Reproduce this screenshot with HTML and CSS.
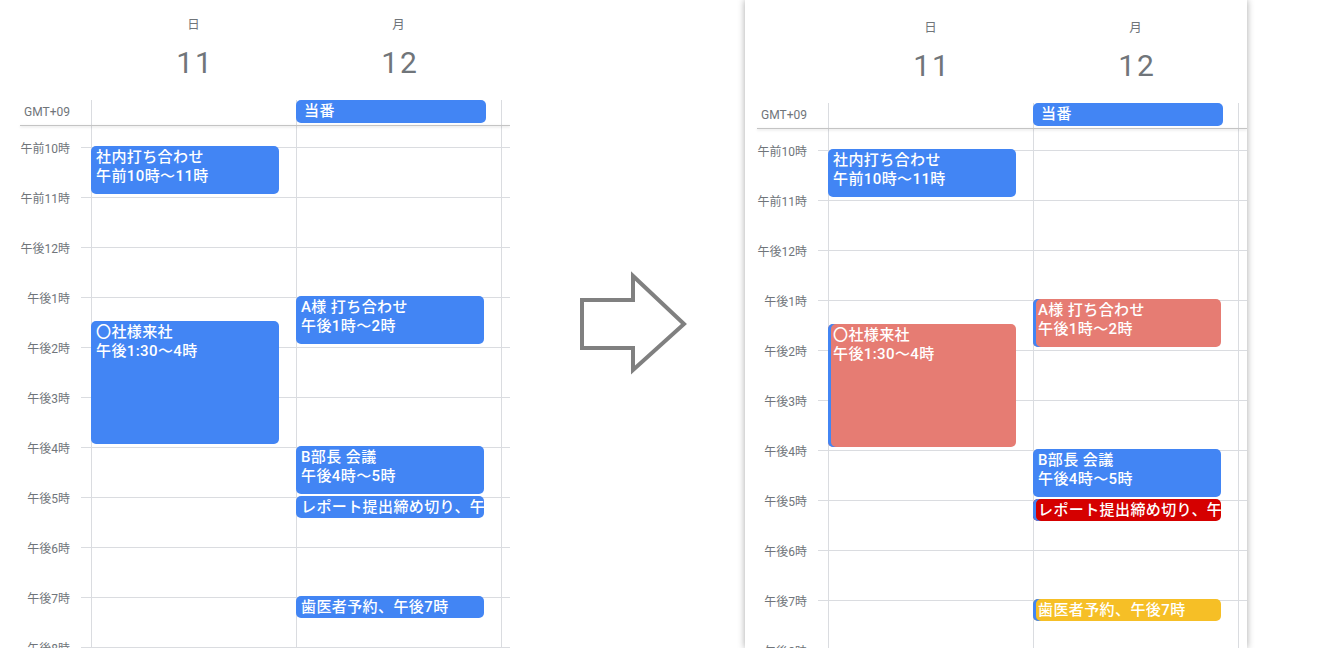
FILE: index.html
```html
<!DOCTYPE html>
<html lang="ja">
<head>
<meta charset="utf-8">
<title>カレンダー</title>
<link rel="stylesheet" href="styles.css">
</head>
<body>
<div class="stage">
  <section class="panel panel-left">
    <div class="days">
      <div></div>
      <div class="day"><div class="dayname">日</div><div class="daynum">11</div></div>
      <div class="day"><div class="dayname">月</div><div class="daynum">12</div></div>
      <div></div>
    </div>
    <div class="allday">
      <div class="tz">GMT+09</div>
      <div class="cell"></div>
      <div class="cell"><div class="allday-event">当番</div></div>
      <div class="cell"></div>
    </div>
    <div class="sep"></div>
    <div class="body">
      <div class="grid">
        <div class="row"><div class="hour">午前9時</div></div>
        <div class="row"><div class="hour">午前10時</div></div>
        <div class="row"><div class="hour">午前11時</div></div>
        <div class="row"><div class="hour">午後12時</div></div>
        <div class="row"><div class="hour">午後1時</div></div>
        <div class="row"><div class="hour">午後2時</div></div>
        <div class="row"><div class="hour">午後3時</div></div>
        <div class="row"><div class="hour">午後4時</div></div>
        <div class="row"><div class="hour">午後5時</div></div>
        <div class="row"><div class="hour">午後6時</div></div>
        <div class="row"><div class="hour">午後7時</div></div>
        <div class="row"><div class="hour">午後8時</div></div>
        <div class="cols">
          <div></div>
          <div class="col">
            <div class="ev" style="top:49px;height:48px">社内打ち合わせ<br>午前10時〜11時</div>
            <div class="ev" style="top:224px;height:123px">〇社様来社<br>午後1:30〜4時</div>
          </div>
          <div class="col">
            <div class="ev" style="top:199px;height:48px">A様 打ち合わせ<br>午後1時〜2時</div>
            <div class="ev" style="top:349px;height:48px">B部長 会議<br>午後4時〜5時</div>
            <div class="ev" style="top:399px;height:22px">レポート提出締め切り、午後5時</div>
            <div class="ev" style="top:499px;height:22px">歯医者予約、午後7時</div>
          </div>
          <div class="col"></div>
        </div>
      </div>
    </div>
  </section>

  <div class="arrow">
    <svg width="235" height="648" viewBox="0 0 235 648">
      <polygon points="72,300 123,300 123,276 174,324 123,370 123,348 72,348" fill="none" stroke="#808080" stroke-width="4" stroke-linejoin="miter"/>
    </svg>
  </div>

  <section class="panel panel-right">
    <div class="days">
      <div></div>
      <div class="day"><div class="dayname">日</div><div class="daynum">11</div></div>
      <div class="day"><div class="dayname">月</div><div class="daynum">12</div></div>
      <div></div>
    </div>
    <div class="allday">
      <div class="tz">GMT+09</div>
      <div class="cell"></div>
      <div class="cell"><div class="allday-event">当番</div></div>
      <div class="cell"></div>
    </div>
    <div class="sep"></div>
    <div class="body">
      <div class="grid">
        <div class="row"><div class="hour">午前9時</div></div>
        <div class="row"><div class="hour">午前10時</div></div>
        <div class="row"><div class="hour">午前11時</div></div>
        <div class="row"><div class="hour">午後12時</div></div>
        <div class="row"><div class="hour">午後1時</div></div>
        <div class="row"><div class="hour">午後2時</div></div>
        <div class="row"><div class="hour">午後3時</div></div>
        <div class="row"><div class="hour">午後4時</div></div>
        <div class="row"><div class="hour">午後5時</div></div>
        <div class="row"><div class="hour">午後6時</div></div>
        <div class="row"><div class="hour">午後7時</div></div>
        <div class="row"><div class="hour">午後8時</div></div>
        <div class="cols">
          <div></div>
          <div class="col">
            <div class="ev" style="top:49px;height:48px">社内打ち合わせ<br>午前10時〜11時</div>
            <div class="ev ev-salmon" style="top:224px;height:123px">〇社様来社<br>午後1:30〜4時</div>
          </div>
          <div class="col">
            <div class="ev ev-salmon" style="top:199px;height:48px">A様 打ち合わせ<br>午後1時〜2時</div>
            <div class="ev" style="top:349px;height:48px">B部長 会議<br>午後4時〜5時</div>
            <div class="ev ev-red" style="top:399px;height:22px">レポート提出締め切り、午後5時</div>
            <div class="ev ev-yellow" style="top:499px;height:22px">歯医者予約、午後7時</div>
          </div>
          <div class="col"></div>
        </div>
      </div>
    </div>
  </section>
</div>
</body>
</html>
```
FILE: styles.css
```css
* { box-sizing: border-box; }

body {
  margin: 0;
  background: #ffffff;
  font-family: Roboto, "Noto Sans CJK JP", sans-serif;
}

.stage {
  display: flex;
  align-items: flex-start;
  height: 648px;
  overflow: hidden;
}

.panel {
  flex: none;
  width: 502px;
  height: 648px;
  background: #ffffff;
  display: flex;
  flex-direction: column;
  overflow: hidden;
}

.panel-left { margin-left: 8px; }

.panel-right {
  padding-top: 3px;
  box-shadow: 0 0 7px rgba(0, 0, 0, 0.35);
}

.arrow {
  flex: none;
  width: 235px;
  height: 648px;
}
.arrow svg { display: block; }

.days {
  flex: none;
  display: grid;
  grid-template-columns: 83px 205px 205px 9px;
  height: 100px;
}

.day { text-align: center; color: #70757a; }

.dayname {
  padding-top: 17px;
  font-size: 12.5px;
  line-height: 16px;
}

.daynum {
  margin-top: 12px;
  font-size: 30px;
  line-height: 36px;
  letter-spacing: 2px;
  padding-left: 3px;
}

.allday {
  flex: none;
  display: grid;
  grid-template-columns: 83px 205px 205px 9px;
  height: 25px;
}

.tz {
  font-size: 12px;
  line-height: 25px;
  color: #70757a;
  text-align: right;
  padding-right: 21px;
}

.cell,
.col {
  background: linear-gradient(#dadce0, #dadce0) no-repeat 0 0 / 1px 100%;
}

.allday-event {
  height: 23px;
  margin-right: 15px;
  border-radius: 5px;
  background: #4285f4;
  color: #ffffff;
  font-size: 15px;
  font-weight: 500;
  line-height: 23px;
  padding-left: 8px;
  letter-spacing: 0.4px;
}

.sep {
  flex: none;
  margin-left: 12px;
  height: 1px;
  background: #c4c4c4;
  box-shadow: 0 1px 3px rgba(0, 0, 0, 0.18);
  position: relative;
  z-index: 1;
}

.body {
  flex: 1;
  overflow: hidden;
}

.grid {
  position: relative;
  margin-top: -29px;
}

.row {
  display: grid;
  grid-template-columns: 83px 1fr;
  height: 50px;
  background: linear-gradient(#dadce0, #dadce0) no-repeat 73px 0 / calc(100% - 73px) 1px;
}

.hour {
  margin-top: -5px;
  font-size: 12px;
  line-height: 14px;
  color: #70757a;
  text-align: right;
  padding-right: 21px;
}

.cols {
  position: absolute;
  inset: 0;
  display: grid;
  grid-template-columns: 83px 205px 205px 9px;
}

.col { position: relative; }

.ev {
  position: absolute;
  left: 0;
  width: 188px;
  border-radius: 5px;
  background: #4285f4;
  color: #ffffff;
  font-size: 15px;
  font-weight: 500;
  line-height: 19px;
  letter-spacing: 0.4px;
  padding: 2px 5px;
  white-space: nowrap;
  overflow: hidden;
}

.ev-salmon {
  background: #e67c73;
  box-shadow: inset 3px 0 0 #4285f4;
}

.ev-red {
  background: #d50000;
  box-shadow: inset 3px 0 0 #4285f4;
}

.ev-yellow {
  background: #f6bf26;
  box-shadow: inset 3px 0 0 #4285f4;
}
```
